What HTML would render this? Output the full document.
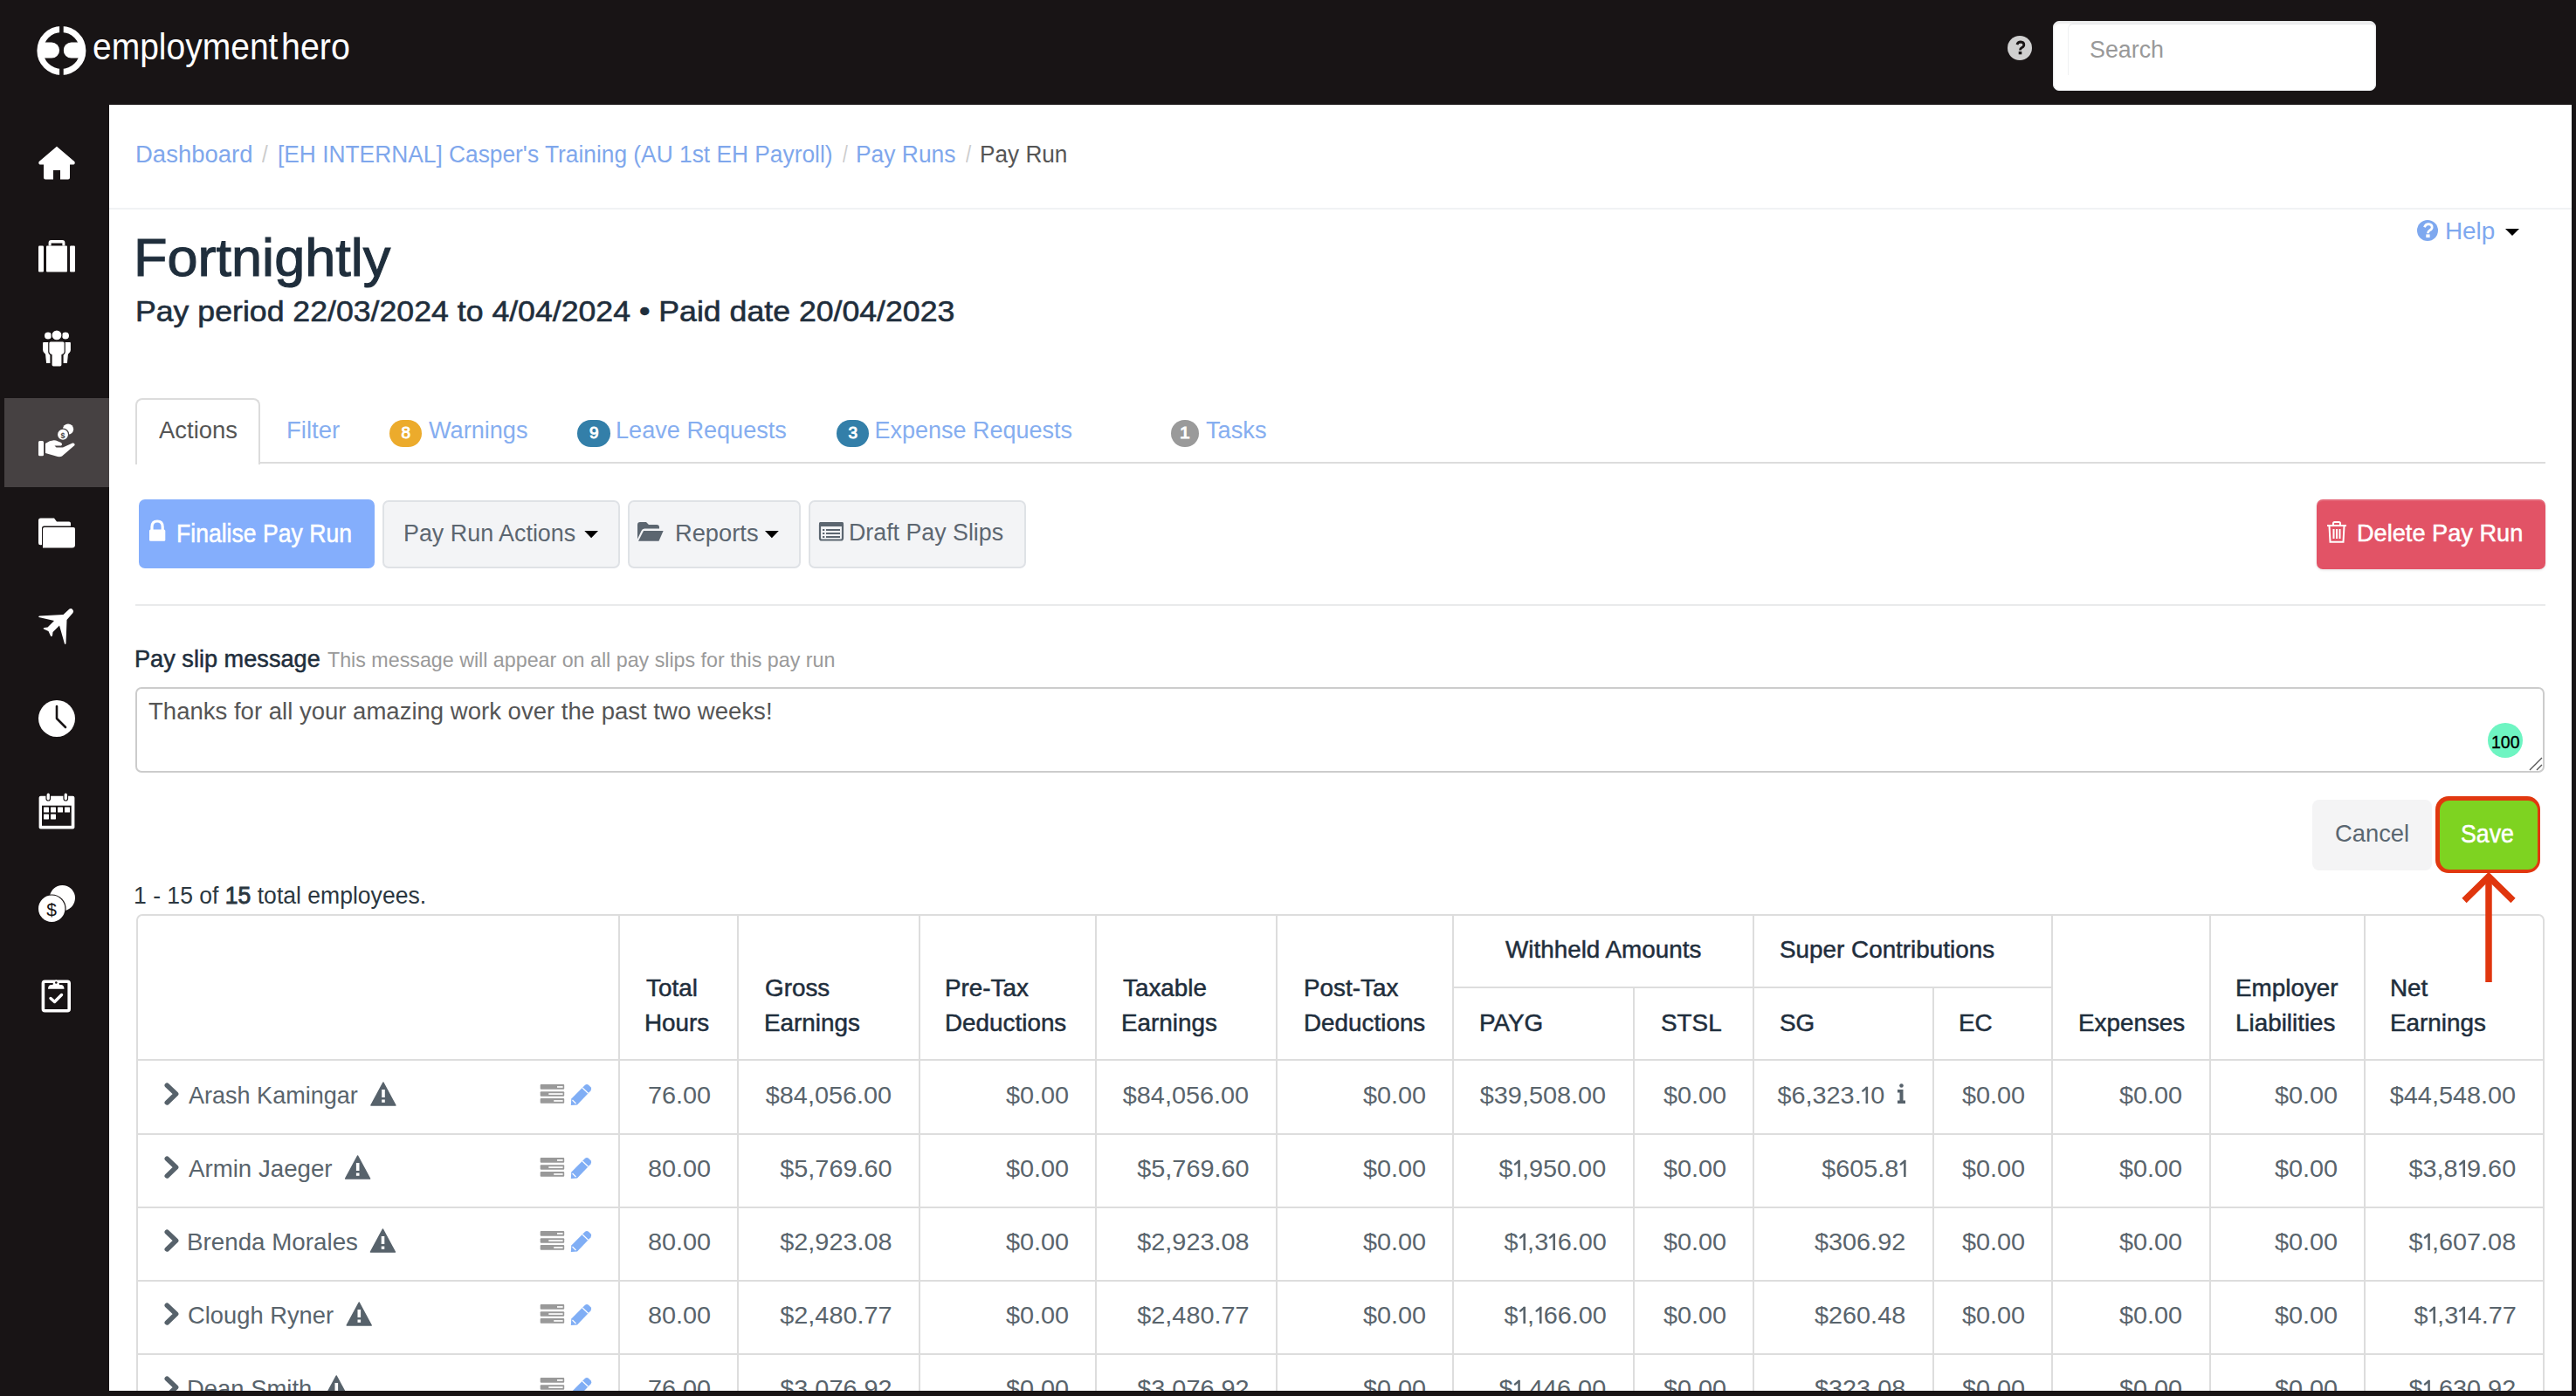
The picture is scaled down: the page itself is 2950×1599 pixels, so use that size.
<!DOCTYPE html>
<html><head><meta charset="utf-8"><style>
html,body{margin:0;padding:0;}
body{width:2950px;height:1599px;overflow:hidden;position:relative;background:#181415;font-family:"Liberation Sans", sans-serif;}
span{display:block;}
</style></head><body>
<div style="position:absolute;left:125px;top:120px;width:2820px;height:1473px;background:#fff;"></div><div style="position:absolute;left:5px;top:456px;width:120px;height:102px;background:#464142;"></div><div style="position:absolute;left:2351px;top:24px;width:370px;height:80px;background:#fff;border-radius:7px;box-shadow:inset 0 2px 2px rgba(0,0,0,0.08);border:1px solid #e6e8ea;box-sizing:border-box;"></div><div style="position:absolute;left:2368px;top:27px;width:350px;height:58px;border-left:1px solid #f0f1f2;border-top:1px solid #e3e5e8;border-radius:6px 0 0 0;"></div><div style="position:absolute;left:125px;top:238px;width:2820px;height:2px;background:#f1f2f4;"></div><div style="position:absolute;left:155px;top:456px;width:143px;height:76px;background:#fff;border:2px solid #dcdcdc;border-bottom:none;border-radius:8px 8px 0 0;box-sizing:border-box;"></div><div style="position:absolute;left:298px;top:529px;width:2617px;height:2px;background:#dcdcdc;"></div><div style="position:absolute;left:446px;top:481px;width:37px;height:31px;background:#ecab2c;border-radius:16px;"></div><div style="position:absolute;left:661.2px;top:481px;width:37.69999999999993px;height:31px;background:#337fa9;border-radius:16px;"></div><div style="position:absolute;left:958px;top:481px;width:37.200000000000045px;height:31px;background:#337fa9;border-radius:16px;"></div><div style="position:absolute;left:1341px;top:481px;width:32px;height:31px;background:#9a9a9a;border-radius:16px;"></div><div style="position:absolute;left:159px;top:572px;width:270px;height:79px;background:#84aefc;border-radius:7px;"></div><div style="position:absolute;left:437.6px;top:572.6px;width:272.4px;height:78.6px;background:#f3f4f6;border:2px solid #dfe2e6;border-radius:7px;box-sizing:border-box;"></div><div style="position:absolute;left:719px;top:572.6px;width:198px;height:78.6px;background:#f3f4f6;border:2px solid #dfe2e6;border-radius:7px;box-sizing:border-box;"></div><div style="position:absolute;left:926px;top:572.6px;width:249px;height:78.6px;background:#f3f4f6;border:2px solid #dfe2e6;border-radius:7px;box-sizing:border-box;"></div><div style="position:absolute;left:2653px;top:572px;width:262px;height:79.6px;background:#e25366;border-radius:7px;box-shadow:0 1px 3px rgba(0,0,0,0.12), inset 0 2px 0 rgba(255,255,255,0.12);"></div><div style="position:absolute;left:155px;top:691.5px;width:2760px;height:2px;background:#e9eaeb;"></div><div style="position:absolute;left:155px;top:787px;width:2759px;height:98px;background:#fff;border:2px solid #cccccc;border-radius:7px;box-sizing:border-box;"></div><div style="position:absolute;left:2648px;top:916px;width:137px;height:80.5px;background:#f4f4f5;border-radius:8px;"></div><div style="position:absolute;left:2789px;top:912px;width:120px;height:88px;background:#e1380f;border-radius:15px;"></div><div style="position:absolute;left:2794px;top:917px;width:112px;height:78.5px;background:#7ed321;border-radius:11px;"></div><div style="position:absolute;left:155.7px;top:1047px;width:2758.8px;height:600px;border:2px solid #dddddd;border-radius:7px;box-sizing:border-box;"></div><div style="position:absolute;left:708px;top:1047px;width:2px;height:600px;background:#dddddd;"></div><div style="position:absolute;left:844px;top:1047px;width:2px;height:600px;background:#dddddd;"></div><div style="position:absolute;left:1052px;top:1047px;width:2px;height:600px;background:#dddddd;"></div><div style="position:absolute;left:1254px;top:1047px;width:2px;height:600px;background:#dddddd;"></div><div style="position:absolute;left:1461px;top:1047px;width:2px;height:600px;background:#dddddd;"></div><div style="position:absolute;left:1663px;top:1047px;width:2px;height:600px;background:#dddddd;"></div><div style="position:absolute;left:1870px;top:1130.5px;width:2px;height:600px;background:#dddddd;"></div><div style="position:absolute;left:2007px;top:1047px;width:2px;height:600px;background:#dddddd;"></div><div style="position:absolute;left:2213px;top:1130.5px;width:2px;height:600px;background:#dddddd;"></div><div style="position:absolute;left:2349px;top:1047px;width:2px;height:600px;background:#dddddd;"></div><div style="position:absolute;left:2530px;top:1047px;width:2px;height:600px;background:#dddddd;"></div><div style="position:absolute;left:2707px;top:1047px;width:2px;height:600px;background:#dddddd;"></div><div style="position:absolute;left:1664px;top:1129.5px;width:686px;height:2px;background:#dddddd;"></div><div style="position:absolute;left:155.7px;top:1213px;width:2758.8px;height:2px;background:#dddddd;"></div><div style="position:absolute;left:155.7px;top:1297.8px;width:2758.8px;height:2px;background:#dddddd;"></div><div style="position:absolute;left:155.7px;top:1381.6px;width:2758.8px;height:2px;background:#dddddd;"></div><div style="position:absolute;left:155.7px;top:1465.6px;width:2758.8px;height:2px;background:#dddddd;"></div><div style="position:absolute;left:155.7px;top:1549.8px;width:2758.8px;height:2px;background:#dddddd;"></div><svg width="2950" height="1599" style="position:absolute;left:0;top:0"><g fill="#fff">
<circle cx="70.4" cy="58" r="24.5" fill="none" stroke="#fff" stroke-width="7"/>
<path d="M45 48.6 H59.1 A9 9 0 0 1 59.1 66.6 H45 Z"/>
<path d="M95.8 48.6 H81.7 A9 9 0 0 0 81.7 66.6 H95.8 Z"/>
<rect x="68.1" y="28" width="4.6" height="60" fill="#181415"/>
</g><circle cx="2313" cy="55" r="14" fill="#d0d0d0"/><path fill="#fff" d="M65 167.8 L44.5 185.3 Q43.5 187.5 45.5 188.5 L50 188.5 L50 203.5 Q50 205.5 52 205.5 L61 205.5 L61 195 L69 195 L69 205.5 L78 205.5 Q80 205.5 80 203.5 L80 188.5 L84.5 188.5 Q86.5 187.5 85.5 185.3 Z"/><g fill="#fff"><rect x="44" y="281.6" width="6" height="29.8" rx="1.2"/><rect x="80" y="281.6" width="6" height="29.8" rx="1.2"/><rect x="53" y="281.6" width="24" height="29.8" rx="1"/><path d="M55.6 281.6 V278 Q55.6 275 58.6 275 H71.4 Q74.4 275 74.4 278 V281.6 H71.4 V278.5 H58.6 V281.6 Z"/></g><g fill="#fff" stroke="#181415" stroke-width="1.2">
<circle cx="55" cy="384.5" r="4.6"/><circle cx="75" cy="384.5" r="4.6"/>
<path d="M48.5 393 Q48.5 391.5 50 391.5 H58 V416.7 H52.5 L51.5 406 Q48.5 404 48.5 401 Z"/>
<path d="M81.5 393 Q81.5 391.5 80 391.5 H72 V416.7 H77.5 L78.5 406 Q81.5 404 81.5 401 Z"/>
<circle cx="65" cy="383.9" r="6"/>
<path d="M55.8 393 Q55.8 390.8 58 390.8 H72 Q74.2 390.8 74.2 393 V403 Q74.2 405.5 71 406.5 V418 Q71 420 69 420 H61 Q59 420 59 418 V406.5 Q55.8 405.5 55.8 403 Z"/>
</g><g fill="#fff">
<rect x="44" y="505" width="6" height="17.3" rx="1.5"/>
<path d="M52 508 Q58 503.5 64 504.5 L70 507 Q72 509 70 510.5 L62.5 510.5 L64.5 512.5 L72 512.5 L83 507.5 Q86 507 85.5 510 L71 522.5 Q69 523.5 66 523 L52 519 Z"/>
<circle cx="78" cy="491.6" r="6.2"/>
<circle cx="72" cy="497.7" r="6.6" stroke="#464142" stroke-width="1.3"/>
</g>
<text x="72" y="501.5" font-family="Liberation Sans" font-size="9" font-weight="700" fill="#464142" text-anchor="middle">$</text><g fill="#fff">
<path d="M44 596 Q44 593.4 46.5 593.4 H62 L65 597.5 H79 Q81 597.5 81 599.5 V602.5 H50.5 Q48 602.5 48 605 V624 Q44 625 44 622 Z"/>
<path d="M49 606 Q49 604 51 604 H84 Q86 604 86 606 V624 Q86 627.5 82.5 627.5 H49 Z"/>
</g><path fill="#fff" d="M83 698 Q85 700 83.5 702 L76.5 710 L75.5 737 Q75 738.5 74 737.5 L68 716.5 L60.5 724 L60 728 Q59 729.5 58 728.5 L55.5 723 L50 720.5 Q49 719.5 50.5 719 L54.5 718.5 L62 711 L44.5 707 Q43.5 706 45 705.5 L72.5 704 L79.5 697.5 Q81.5 696.5 83 698 Z"/><circle cx="65" cy="823" r="21" fill="#fff"/><path d="M65 809 V823 L75 833" fill="none" stroke="#181415" stroke-width="2.6" stroke-linecap="round" stroke-linejoin="round"/><g fill="#fff"><rect x="44.6" y="911.7" width="40.8" height="37.8" rx="2"/>
<rect x="53" y="908" width="4.5" height="9" rx="2.2" stroke="#181415" stroke-width="1.2"/><rect x="73" y="908" width="4.5" height="9" rx="2.2" stroke="#181415" stroke-width="1.2"/></g>
<rect x="48" y="922.7" width="33.7" height="23.1" fill="#181415"/>
<g fill="#fff"><rect x="50" y="924.5" width="6" height="6" rx=".6"/><rect x="58" y="924.5" width="6" height="6" rx=".6"/><rect x="66" y="924.5" width="6" height="6" rx=".6"/><rect x="74" y="924.5" width="6" height="6" rx=".6"/><rect x="50" y="932.4" width="6" height="6" rx=".6"/><rect x="58" y="932.4" width="6" height="6" rx=".6"/></g><circle cx="71.4" cy="1028.6" r="14.6" fill="#fff"/>
<circle cx="59.2" cy="1040.8" r="16.4" fill="#181415"/>
<circle cx="59.2" cy="1040.8" r="15.2" fill="#fff"/>
<text x="59.2" y="1048.5" font-family="Liberation Sans" font-size="21" font-weight="400" fill="#181415" text-anchor="middle">$</text><rect x="49.4" y="1124.2" width="29.8" height="33.5" rx="2" fill="none" stroke="#fff" stroke-width="3.6"/>
<path d="M55 1132.7 Q55 1128 59 1128 L60.5 1128 Q61 1123 64.3 1122.5 Q67.5 1123 68 1128 L69.5 1128 Q73.5 1128 73.5 1132.7 Z" fill="#fff"/>
<circle cx="64.3" cy="1125.5" r="1.3" fill="#181415"/>
<path d="M58 1143.5 L62.5 1147.5 L70.5 1139.5" fill="none" stroke="#fff" stroke-width="3.4" stroke-linecap="round" stroke-linejoin="round"/><path d="M2309.9 51.2 Q2310.9 48 2314 48 Q2317.8 48.2 2317.8 51.2 Q2317.8 53.3 2315.4 54.5 Q2313.5 55.5 2313.5 57.5" fill="none" stroke="#181415" stroke-width="2.8"/><rect x="2311.7" y="59" width="3.6" height="3.3" fill="#181415"/><circle cx="2780" cy="264" r="12" fill="#7ea8ef"/><path d="M2776.4 260.2 Q2777.8 256.6 2781.2 256.6 Q2785.2 256.9 2785.2 260.2 Q2785.2 262.5 2782.4 263.9 Q2780.4 265 2780.4 267.3" fill="none" stroke="#fff" stroke-width="2.7"/><rect x="2778.3" y="268.4" width="4.3" height="3.7" fill="#fff"/><path d="M2869 262 H2885 L2877 270 Z" fill="#000"/><g fill="#fff"><path d="M174 607 V603.5 Q174 597 180.1 597 Q186.2 597 186.2 603.5 V607" fill="none" stroke="#fff" stroke-width="3.2"/><rect x="171" y="606.5" width="18.3" height="13.3" rx="1.5"/></g><path d="M669.3 607.9 H685 L677.15 616.2 Z" fill="#000"/><path fill="#5c6670" d="M730 601 Q730 598 733 598 H740 L743 601 H752 Q755 601 755 604 V605.5 H738 Q735.5 605.5 734.5 608 L730 617.5 Z"/><path fill="#5c6670" d="M737 608 H759.6 L754.5 619.8 H731 Z"/><path d="M876 607.9 H891.8 L883.9 616.2 Z" fill="#000"/><g><rect x="939" y="599" width="26" height="19.5" rx="2" fill="none" stroke="#5c6670" stroke-width="2.2"/><rect x="938" y="598" width="28" height="5" rx="1.5" fill="#5c6670"/><g fill="#5c6670"><rect x="942" y="606" width="2.3" height="2"/><rect x="946" y="606" width="16" height="2"/><rect x="942" y="610" width="2.3" height="2"/><rect x="946" y="610" width="16" height="2"/><rect x="942" y="614" width="2.3" height="2"/><rect x="946" y="614" width="16" height="2"/></g></g><g fill="none" stroke="#fff" stroke-width="2"><path d="M2665 602 H2687"/><path d="M2672 602 V599.5 Q2672 598 2673.5 598 H2678.5 Q2680 598 2680 599.5 V602"/><path d="M2667.5 602.5 L2668.5 620.7 H2683.5 L2684.5 602.5"/><path d="M2672.5 606 V617 M2676 606 V617 M2679.5 606 V617"/></g><circle cx="2869" cy="848" r="20" fill="#6ef5c2"/><path d="M2897 882 L2911 868 M2905 882 L2911 876" stroke="#555" stroke-width="1.4"/><g stroke="#e0360e" stroke-width="7.5" fill="none"><path d="M2850 1125 V1006"/><path d="M2822 1031.5 L2850 1004 L2878 1031.5"/></g><path d="M191.3 1243.2 L201.6 1253 L191.3 1262.9" fill="none" stroke="#57626b" stroke-width="5.6" stroke-linecap="round" stroke-linejoin="round"/><path d="M438.9 1240 L452.9 1266 H424.9 Z" fill="#57626b" stroke="#57626b" stroke-width="1.5" stroke-linejoin="round"/><rect x="437.2" y="1248" width="3.6" height="9" fill="#fff"/><rect x="437.2" y="1259.5" width="3.6" height="3.3" fill="#fff"/><rect x="618.7" y="1242.1" width="27.5" height="5.6" rx="1" fill="#999"/><rect x="638" y="1244.1" width="6.600000000000023" height="1.7" fill="#fff"/><rect x="618.7" y="1250.2" width="27.5" height="5.6" rx="1" fill="#999"/><rect x="628.3" y="1252.2" width="16.300000000000068" height="1.7" fill="#fff"/><rect x="618.7" y="1258.1" width="27.5" height="5.6" rx="1" fill="#999"/><rect x="634.2" y="1260.1" width="10.399999999999977" height="1.7" fill="#fff"/><g transform="translate(0 0)"><path d="M653.8 1265.9 L654.3 1258.5 L670 1242.8 Q672 1241.3 674 1242.8 L676.5 1245.2 Q678 1247.2 676.5 1249.2 L661 1265.4 Z" fill="#80aef5"/><path d="M667 1246 L673.5 1252.3" stroke="#fff" stroke-width="1.2"/><path d="M655.5 1260 L659.5 1264" stroke="#fff" stroke-width="1.3"/></g><path d="M191.3 1327.2 L201.6 1337 L191.3 1346.9" fill="none" stroke="#57626b" stroke-width="5.6" stroke-linecap="round" stroke-linejoin="round"/><path d="M409.6 1324 L423.6 1350 H395.6 Z" fill="#57626b" stroke="#57626b" stroke-width="1.5" stroke-linejoin="round"/><rect x="407.90000000000003" y="1332" width="3.6" height="9" fill="#fff"/><rect x="407.90000000000003" y="1343.5" width="3.6" height="3.3" fill="#fff"/><rect x="618.7" y="1326.1" width="27.5" height="5.6" rx="1" fill="#999"/><rect x="638" y="1328.1" width="6.600000000000023" height="1.7" fill="#fff"/><rect x="618.7" y="1334.2" width="27.5" height="5.6" rx="1" fill="#999"/><rect x="628.3" y="1336.2" width="16.300000000000068" height="1.7" fill="#fff"/><rect x="618.7" y="1342.1" width="27.5" height="5.6" rx="1" fill="#999"/><rect x="634.2" y="1344.1" width="10.399999999999977" height="1.7" fill="#fff"/><g transform="translate(0 84)"><path d="M653.8 1265.9 L654.3 1258.5 L670 1242.8 Q672 1241.3 674 1242.8 L676.5 1245.2 Q678 1247.2 676.5 1249.2 L661 1265.4 Z" fill="#80aef5"/><path d="M667 1246 L673.5 1252.3" stroke="#fff" stroke-width="1.2"/><path d="M655.5 1260 L659.5 1264" stroke="#fff" stroke-width="1.3"/></g><path d="M191.3 1411.2 L201.6 1421 L191.3 1430.9" fill="none" stroke="#57626b" stroke-width="5.6" stroke-linecap="round" stroke-linejoin="round"/><path d="M438.4 1408 L452.4 1434 H424.4 Z" fill="#57626b" stroke="#57626b" stroke-width="1.5" stroke-linejoin="round"/><rect x="436.7" y="1416" width="3.6" height="9" fill="#fff"/><rect x="436.7" y="1427.5" width="3.6" height="3.3" fill="#fff"/><rect x="618.7" y="1410.1" width="27.5" height="5.6" rx="1" fill="#999"/><rect x="638" y="1412.1" width="6.600000000000023" height="1.7" fill="#fff"/><rect x="618.7" y="1418.2" width="27.5" height="5.6" rx="1" fill="#999"/><rect x="628.3" y="1420.2" width="16.300000000000068" height="1.7" fill="#fff"/><rect x="618.7" y="1426.1" width="27.5" height="5.6" rx="1" fill="#999"/><rect x="634.2" y="1428.1" width="10.399999999999977" height="1.7" fill="#fff"/><g transform="translate(0 168)"><path d="M653.8 1265.9 L654.3 1258.5 L670 1242.8 Q672 1241.3 674 1242.8 L676.5 1245.2 Q678 1247.2 676.5 1249.2 L661 1265.4 Z" fill="#80aef5"/><path d="M667 1246 L673.5 1252.3" stroke="#fff" stroke-width="1.2"/><path d="M655.5 1260 L659.5 1264" stroke="#fff" stroke-width="1.3"/></g><path d="M191.3 1495.2 L201.6 1505 L191.3 1514.9" fill="none" stroke="#57626b" stroke-width="5.6" stroke-linecap="round" stroke-linejoin="round"/><path d="M411.2 1492 L425.2 1518 H397.2 Z" fill="#57626b" stroke="#57626b" stroke-width="1.5" stroke-linejoin="round"/><rect x="409.5" y="1500" width="3.6" height="9" fill="#fff"/><rect x="409.5" y="1511.5" width="3.6" height="3.3" fill="#fff"/><rect x="618.7" y="1494.1" width="27.5" height="5.6" rx="1" fill="#999"/><rect x="638" y="1496.1" width="6.600000000000023" height="1.7" fill="#fff"/><rect x="618.7" y="1502.2" width="27.5" height="5.6" rx="1" fill="#999"/><rect x="628.3" y="1504.2" width="16.300000000000068" height="1.7" fill="#fff"/><rect x="618.7" y="1510.1" width="27.5" height="5.6" rx="1" fill="#999"/><rect x="634.2" y="1512.1" width="10.399999999999977" height="1.7" fill="#fff"/><g transform="translate(0 252)"><path d="M653.8 1265.9 L654.3 1258.5 L670 1242.8 Q672 1241.3 674 1242.8 L676.5 1245.2 Q678 1247.2 676.5 1249.2 L661 1265.4 Z" fill="#80aef5"/><path d="M667 1246 L673.5 1252.3" stroke="#fff" stroke-width="1.2"/><path d="M655.5 1260 L659.5 1264" stroke="#fff" stroke-width="1.3"/></g><path d="M191.3 1579.2 L201.6 1589 L191.3 1598.9" fill="none" stroke="#57626b" stroke-width="5.6" stroke-linecap="round" stroke-linejoin="round"/><path d="M385.2 1576 L399.2 1602 H371.2 Z" fill="#57626b" stroke="#57626b" stroke-width="1.5" stroke-linejoin="round"/><rect x="383.5" y="1584" width="3.6" height="9" fill="#fff"/><rect x="383.5" y="1595.5" width="3.6" height="3.3" fill="#fff"/><rect x="618.7" y="1578.1" width="27.5" height="5.6" rx="1" fill="#999"/><rect x="638" y="1580.1" width="6.600000000000023" height="1.7" fill="#fff"/><rect x="618.7" y="1586.2" width="27.5" height="5.6" rx="1" fill="#999"/><rect x="628.3" y="1588.2" width="16.300000000000068" height="1.7" fill="#fff"/><rect x="618.7" y="1594.1" width="27.5" height="5.6" rx="1" fill="#999"/><rect x="634.2" y="1596.1" width="10.399999999999977" height="1.7" fill="#fff"/><g transform="translate(0 336)"><path d="M653.8 1265.9 L654.3 1258.5 L670 1242.8 Q672 1241.3 674 1242.8 L676.5 1245.2 Q678 1247.2 676.5 1249.2 L661 1265.4 Z" fill="#80aef5"/><path d="M667 1246 L673.5 1252.3" stroke="#fff" stroke-width="1.2"/><path d="M655.5 1260 L659.5 1264" stroke="#fff" stroke-width="1.3"/></g><g fill="#57626b"><circle cx="2177.5" cy="1243.5" r="2.3"/><path d="M2173 1248 H2179.5 V1260.5 H2182 V1264 H2173 V1260.5 H2175.5 V1251.5 H2173 Z"/></g></svg>
<span id="t0" style="position:absolute;top:32.74px;font-size:42px;line-height:42px;font-weight:400;color:#fff;white-space:nowrap;left:105.57px;transform-origin:0 0;transform:scaleX(0.9286);">employment</span><span id="t1" style="position:absolute;top:32.74px;font-size:42px;line-height:42px;font-weight:400;color:#fff;white-space:nowrap;left:322.12px;transform-origin:0 0;transform:scaleX(0.9380);">hero</span><span id="t2" style="position:absolute;top:43.64px;font-size:27px;line-height:27px;font-weight:400;color:#999;white-space:nowrap;left:2393.01px;transform-origin:0 0;transform:scaleX(0.9936);">Search</span><span id="t3" style="position:absolute;top:163.84px;font-size:27px;line-height:27px;font-weight:400;color:#7fa7ec;white-space:nowrap;left:154.76px;transform-origin:0 0;transform:scaleX(1.0180);">Dashboard</span><span id="t4" style="position:absolute;top:163.84px;font-size:27px;line-height:27px;font-weight:400;color:#ccc;white-space:nowrap;left:300.40px;transform-origin:0 0;transform:scaleX(0.9000);">/</span><span id="t5" style="position:absolute;top:163.84px;font-size:27px;line-height:27px;font-weight:400;color:#7fa7ec;white-space:nowrap;left:317.92px;transform-origin:0 0;transform:scaleX(0.9750);">[EH INTERNAL] Casper's Training (AU 1st EH Payroll)</span><span id="t6" style="position:absolute;top:163.84px;font-size:27px;line-height:27px;font-weight:400;color:#ccc;white-space:nowrap;left:964.80px;transform-origin:0 0;transform:scaleX(0.7750);">/</span><span id="t7" style="position:absolute;top:163.84px;font-size:27px;line-height:27px;font-weight:400;color:#7fa7ec;white-space:nowrap;left:980.04px;transform-origin:0 0;transform:scaleX(0.9777);">Pay Runs</span><span id="t8" style="position:absolute;top:163.84px;font-size:27px;line-height:27px;font-weight:400;color:#ccc;white-space:nowrap;left:1106.00px;transform-origin:0 0;transform:scaleX(0.8250);">/</span><span id="t9" style="position:absolute;top:163.84px;font-size:27px;line-height:27px;font-weight:400;color:#555;white-space:nowrap;left:1121.56px;transform-origin:0 0;transform:scaleX(0.9698);">Pay Run</span><span id="t10" style="position:absolute;top:263.50px;font-size:62px;line-height:62px;font-weight:400;color:#1f2e3c;white-space:nowrap;left:153.12px;transform-origin:0 0;transform:scaleX(1.0167);-webkit-text-stroke:1.12px #1f2e3c;">Fortnightly</span><span id="t11" style="position:absolute;top:339.76px;font-size:33px;line-height:33px;font-weight:400;color:#1f2e3c;white-space:nowrap;left:155.24px;transform-origin:0 0;transform:scaleX(1.0805);-webkit-text-stroke:0.59px #1f2e3c;">Pay period 22/03/2024 to 4/04/2024 • Paid date 20/04/2023</span><span id="t12" style="position:absolute;top:252.04px;font-size:27px;line-height:27px;font-weight:400;color:#7ea8ef;white-space:nowrap;left:2799.74px;transform-origin:0 0;transform:scaleX(1.0321);">Help</span><span id="t13" style="position:absolute;top:480.24px;font-size:27px;line-height:27px;font-weight:400;color:#555;white-space:nowrap;left:182.00px;transform-origin:0 0;transform:scaleX(1.0166);">Actions</span><span id="t14" style="position:absolute;top:479.84px;font-size:27px;line-height:27px;font-weight:400;color:#86aef0;white-space:nowrap;left:327.76px;transform-origin:0 0;transform:scaleX(1.0206);">Filter</span><span id="t15" style="position:absolute;top:486.41px;font-size:19px;line-height:19px;font-weight:400;color:#fff;white-space:nowrap;left:459.50px;transform-origin:0 0;-webkit-text-stroke:0.95px #fff;">8</span><span id="t16" style="position:absolute;top:479.84px;font-size:27px;line-height:27px;font-weight:400;color:#86aef0;white-space:nowrap;left:491.00px;transform-origin:0 0;transform:scaleX(1.0041);">Warnings</span><span id="t17" style="position:absolute;top:486.41px;font-size:19px;line-height:19px;font-weight:400;color:#fff;white-space:nowrap;left:675.05px;transform-origin:0 0;-webkit-text-stroke:0.95px #fff;">9</span><span id="t18" style="position:absolute;top:479.84px;font-size:27px;line-height:27px;font-weight:400;color:#86aef0;white-space:nowrap;left:704.99px;transform-origin:0 0;transform:scaleX(1.0040);">Leave Requests</span><span id="t19" style="position:absolute;top:486.41px;font-size:19px;line-height:19px;font-weight:400;color:#fff;white-space:nowrap;left:971.60px;transform-origin:0 0;-webkit-text-stroke:0.95px #fff;">3</span><span id="t20" style="position:absolute;top:479.84px;font-size:27px;line-height:27px;font-weight:400;color:#86aef0;white-space:nowrap;left:1001.40px;transform-origin:0 0;">Expense Requests</span><span id="t21" style="position:absolute;top:486.41px;font-size:19px;line-height:19px;font-weight:400;color:#fff;white-space:nowrap;left:1350.89px;transform-origin:0 0;transform:scaleX(1.1111);-webkit-text-stroke:0.95px #fff;">1</span><span id="t22" style="position:absolute;top:479.84px;font-size:27px;line-height:27px;font-weight:400;color:#86aef0;white-space:nowrap;left:1381.40px;transform-origin:0 0;transform:scaleX(1.0071);">Tasks</span><span id="t23" style="position:absolute;top:595.60px;font-size:30px;line-height:30px;font-weight:400;color:#fff;white-space:nowrap;left:201.83px;transform-origin:0 0;transform:scaleX(0.8862);-webkit-text-stroke:0.54px #fff;">Finalise Pay Run</span><span id="t24" style="position:absolute;top:597.54px;font-size:27px;line-height:27px;font-weight:400;color:#5c6670;white-space:nowrap;left:461.81px;transform-origin:0 0;transform:scaleX(0.9954);">Pay Run Actions</span><span id="t25" style="position:absolute;top:597.64px;font-size:27px;line-height:27px;font-weight:400;color:#5c6670;white-space:nowrap;left:772.98px;transform-origin:0 0;transform:scaleX(1.0104);">Reports</span><span id="t26" style="position:absolute;top:597.34px;font-size:27px;line-height:27px;font-weight:400;color:#5c6670;white-space:nowrap;left:972.02px;transform-origin:0 0;transform:scaleX(0.9917);">Draft Pay Slips</span><span id="t27" style="position:absolute;top:597.39px;font-size:28px;line-height:28px;font-weight:400;color:#fff;white-space:nowrap;left:2699.06px;transform-origin:0 0;transform:scaleX(0.9702);-webkit-text-stroke:0.50px #fff;">Delete Pay Run</span><span id="t28" style="position:absolute;top:740.99px;font-size:28px;line-height:28px;font-weight:400;color:#1f2e3c;white-space:nowrap;left:153.76px;transform-origin:0 0;transform:scaleX(0.9697);-webkit-text-stroke:0.50px #1f2e3c;">Pay slip message</span><span id="t29" style="position:absolute;top:744.38px;font-size:24px;line-height:24px;font-weight:400;color:#9a9a9a;white-space:nowrap;left:375.00px;transform-origin:0 0;transform:scaleX(0.9684);">This message will appear on all pay slips for this pay run</span><span id="t30" style="position:absolute;top:801.84px;font-size:27px;line-height:27px;font-weight:400;color:#555;white-space:nowrap;left:170.00px;transform-origin:0 0;transform:scaleX(1.0196);">Thanks for all your amazing work over the past two weeks!</span><span id="t31" style="position:absolute;top:838.92px;font-size:21px;line-height:21px;font-weight:400;color:#000;white-space:nowrap;left:2852.57px;transform-origin:0 0;transform:scaleX(0.9293);-webkit-text-stroke:0.38px #000;">100</span><span id="t32" style="position:absolute;top:941.49px;font-size:28px;line-height:28px;font-weight:400;color:#5a6670;white-space:nowrap;left:2674.02px;transform-origin:0 0;transform:scaleX(0.9772);">Cancel</span><span id="t33" style="position:absolute;top:940.65px;font-size:29px;line-height:29px;font-weight:400;color:#fff;white-space:nowrap;left:2818.08px;transform-origin:0 0;transform:scaleX(0.9223);-webkit-text-stroke:0.52px #fff;">Save</span><span id="t34" style="position:absolute;top:1012.54px;font-size:27px;line-height:27px;font-weight:400;color:#2b3740;white-space:nowrap;left:153.03px;transform-origin:0 0;transform:scaleX(0.9834);">1 - 15 of <b style="font-weight:400;-webkit-text-stroke:0.9px #2b3740">15</b> total employees.</span><span id="t35" style="position:absolute;top:1117.69px;font-size:27.3px;line-height:27.3px;font-weight:400;color:#1f2e3c;white-space:nowrap;left:740.40px;transform-origin:0 0;transform:scaleX(1.0200);-webkit-text-stroke:0.49px #1f2e3c;">Total</span><span id="t36" style="position:absolute;top:1157.99px;font-size:27.3px;line-height:27.3px;font-weight:400;color:#1f2e3c;white-space:nowrap;left:738.36px;transform-origin:0 0;transform:scaleX(1.0200);-webkit-text-stroke:0.49px #1f2e3c;">Hours</span><span id="t37" style="position:absolute;top:1117.69px;font-size:27.3px;line-height:27.3px;font-weight:400;color:#1f2e3c;white-space:nowrap;left:875.68px;transform-origin:0 0;transform:scaleX(1.0200);-webkit-text-stroke:0.49px #1f2e3c;">Gross</span><span id="t38" style="position:absolute;top:1157.99px;font-size:27.3px;line-height:27.3px;font-weight:400;color:#1f2e3c;white-space:nowrap;left:874.66px;transform-origin:0 0;transform:scaleX(1.0200);-webkit-text-stroke:0.49px #1f2e3c;">Earnings</span><span id="t39" style="position:absolute;top:1117.69px;font-size:27.3px;line-height:27.3px;font-weight:400;color:#1f2e3c;white-space:nowrap;left:1081.96px;transform-origin:0 0;transform:scaleX(1.0200);-webkit-text-stroke:0.49px #1f2e3c;">Pre-Tax</span><span id="t40" style="position:absolute;top:1157.99px;font-size:27.3px;line-height:27.3px;font-weight:400;color:#1f2e3c;white-space:nowrap;left:1081.96px;transform-origin:0 0;transform:scaleX(1.0200);-webkit-text-stroke:0.49px #1f2e3c;">Deductions</span><span id="t41" style="position:absolute;top:1117.69px;font-size:27.3px;line-height:27.3px;font-weight:400;color:#1f2e3c;white-space:nowrap;left:1286.00px;transform-origin:0 0;transform:scaleX(1.0200);-webkit-text-stroke:0.49px #1f2e3c;">Taxable</span><span id="t42" style="position:absolute;top:1157.99px;font-size:27.3px;line-height:27.3px;font-weight:400;color:#1f2e3c;white-space:nowrap;left:1283.96px;transform-origin:0 0;transform:scaleX(1.0200);-webkit-text-stroke:0.49px #1f2e3c;">Earnings</span><span id="t43" style="position:absolute;top:1117.69px;font-size:27.3px;line-height:27.3px;font-weight:400;color:#1f2e3c;white-space:nowrap;left:1492.56px;transform-origin:0 0;transform:scaleX(1.0200);-webkit-text-stroke:0.49px #1f2e3c;">Post-Tax</span><span id="t44" style="position:absolute;top:1157.99px;font-size:27.3px;line-height:27.3px;font-weight:400;color:#1f2e3c;white-space:nowrap;left:1492.56px;transform-origin:0 0;transform:scaleX(1.0200);-webkit-text-stroke:0.49px #1f2e3c;">Deductions</span><span id="t45" style="position:absolute;top:1074.09px;font-size:27.3px;line-height:27.3px;font-weight:400;color:#1f2e3c;white-space:nowrap;left:1724.00px;transform-origin:0 0;transform:scaleX(1.0200);-webkit-text-stroke:0.49px #1f2e3c;">Withheld Amounts</span><span id="t46" style="position:absolute;top:1074.09px;font-size:27.3px;line-height:27.3px;font-weight:400;color:#1f2e3c;white-space:nowrap;left:2037.98px;transform-origin:0 0;transform:scaleX(1.0200);-webkit-text-stroke:0.49px #1f2e3c;">Super Contributions</span><span id="t47" style="position:absolute;top:1157.99px;font-size:27.3px;line-height:27.3px;font-weight:400;color:#1f2e3c;white-space:nowrap;left:1693.96px;transform-origin:0 0;transform:scaleX(1.0200);-webkit-text-stroke:0.49px #1f2e3c;">PAYG</span><span id="t48" style="position:absolute;top:1157.99px;font-size:27.3px;line-height:27.3px;font-weight:400;color:#1f2e3c;white-space:nowrap;left:1901.98px;transform-origin:0 0;transform:scaleX(1.0200);-webkit-text-stroke:0.49px #1f2e3c;">STSL</span><span id="t49" style="position:absolute;top:1157.99px;font-size:27.3px;line-height:27.3px;font-weight:400;color:#1f2e3c;white-space:nowrap;left:2037.98px;transform-origin:0 0;transform:scaleX(1.0200);-webkit-text-stroke:0.49px #1f2e3c;">SG</span><span id="t50" style="position:absolute;top:1157.99px;font-size:27.3px;line-height:27.3px;font-weight:400;color:#1f2e3c;white-space:nowrap;left:2242.96px;transform-origin:0 0;transform:scaleX(1.0200);-webkit-text-stroke:0.49px #1f2e3c;">EC</span><span id="t51" style="position:absolute;top:1157.99px;font-size:27.3px;line-height:27.3px;font-weight:400;color:#1f2e3c;white-space:nowrap;left:2379.56px;transform-origin:0 0;transform:scaleX(1.0200);-webkit-text-stroke:0.49px #1f2e3c;">Expenses</span><span id="t52" style="position:absolute;top:1117.69px;font-size:27.3px;line-height:27.3px;font-weight:400;color:#1f2e3c;white-space:nowrap;left:2559.96px;transform-origin:0 0;transform:scaleX(1.0200);-webkit-text-stroke:0.49px #1f2e3c;">Employer</span><span id="t53" style="position:absolute;top:1157.99px;font-size:27.3px;line-height:27.3px;font-weight:400;color:#1f2e3c;white-space:nowrap;left:2559.96px;transform-origin:0 0;transform:scaleX(1.0200);-webkit-text-stroke:0.49px #1f2e3c;">Liabilities</span><span id="t54" style="position:absolute;top:1117.69px;font-size:27.3px;line-height:27.3px;font-weight:400;color:#1f2e3c;white-space:nowrap;left:2736.96px;transform-origin:0 0;transform:scaleX(1.0200);-webkit-text-stroke:0.49px #1f2e3c;">Net</span><span id="t55" style="position:absolute;top:1157.99px;font-size:27.3px;line-height:27.3px;font-weight:400;color:#1f2e3c;white-space:nowrap;left:2736.96px;transform-origin:0 0;transform:scaleX(1.0200);-webkit-text-stroke:0.49px #1f2e3c;">Earnings</span><span id="t56" style="position:absolute;top:1241.29px;font-size:28px;line-height:28px;font-weight:400;color:#59646c;white-space:nowrap;left:216.40px;transform-origin:0 0;transform:scaleX(0.9654);">Arash Kamingar</span><span id="t57" style="position:absolute;top:1241.29px;font-size:28px;line-height:28px;font-weight:400;color:#59646c;white-space:nowrap;right:2136.41px;transform-origin:100% 0;transform:scaleX(1.0300);">76.00</span><span id="t58" style="position:absolute;top:1241.29px;font-size:28px;line-height:28px;font-weight:400;color:#59646c;white-space:nowrap;right:1928.41px;transform-origin:100% 0;transform:scaleX(1.0300);">$84,056.00</span><span id="t59" style="position:absolute;top:1241.29px;font-size:28px;line-height:28px;font-weight:400;color:#59646c;white-space:nowrap;right:1726.41px;transform-origin:100% 0;transform:scaleX(1.0300);">$0.00</span><span id="t60" style="position:absolute;top:1241.29px;font-size:28px;line-height:28px;font-weight:400;color:#59646c;white-space:nowrap;right:1519.41px;transform-origin:100% 0;transform:scaleX(1.0300);">$84,056.00</span><span id="t61" style="position:absolute;top:1241.29px;font-size:28px;line-height:28px;font-weight:400;color:#59646c;white-space:nowrap;right:1317.41px;transform-origin:100% 0;transform:scaleX(1.0300);">$0.00</span><span id="t62" style="position:absolute;top:1241.29px;font-size:28px;line-height:28px;font-weight:400;color:#59646c;white-space:nowrap;right:1110.41px;transform-origin:100% 0;transform:scaleX(1.0300);">$39,508.00</span><span id="t63" style="position:absolute;top:1241.29px;font-size:28px;line-height:28px;font-weight:400;color:#59646c;white-space:nowrap;right:973.41px;transform-origin:100% 0;transform:scaleX(1.0300);">$0.00</span><span id="t64" style="position:absolute;top:1241.29px;font-size:28px;line-height:28px;font-weight:400;color:#59646c;white-space:nowrap;right:631.41px;transform-origin:100% 0;transform:scaleX(1.0300);">$0.00</span><span id="t65" style="position:absolute;top:1241.29px;font-size:28px;line-height:28px;font-weight:400;color:#59646c;white-space:nowrap;right:451.41px;transform-origin:100% 0;transform:scaleX(1.0300);">$0.00</span><span id="t66" style="position:absolute;top:1241.29px;font-size:28px;line-height:28px;font-weight:400;color:#59646c;white-space:nowrap;right:273.41px;transform-origin:100% 0;transform:scaleX(1.0300);">$0.00</span><span id="t67" style="position:absolute;top:1241.29px;font-size:28px;line-height:28px;font-weight:400;color:#59646c;white-space:nowrap;right:68.41px;transform-origin:100% 0;transform:scaleX(1.0300);">$44,548.00</span><span id="t68" style="position:absolute;top:1325.29px;font-size:28px;line-height:28px;font-weight:400;color:#59646c;white-space:nowrap;left:216.40px;transform-origin:0 0;transform:scaleX(0.9881);">Armin Jaeger</span><span id="t69" style="position:absolute;top:1325.29px;font-size:28px;line-height:28px;font-weight:400;color:#59646c;white-space:nowrap;right:2136.41px;transform-origin:100% 0;transform:scaleX(1.0300);">80.00</span><span id="t70" style="position:absolute;top:1325.29px;font-size:28px;line-height:28px;font-weight:400;color:#59646c;white-space:nowrap;right:1928.41px;transform-origin:100% 0;transform:scaleX(1.0300);">$5,769.60</span><span id="t71" style="position:absolute;top:1325.29px;font-size:28px;line-height:28px;font-weight:400;color:#59646c;white-space:nowrap;right:1726.41px;transform-origin:100% 0;transform:scaleX(1.0300);">$0.00</span><span id="t72" style="position:absolute;top:1325.29px;font-size:28px;line-height:28px;font-weight:400;color:#59646c;white-space:nowrap;right:1519.41px;transform-origin:100% 0;transform:scaleX(1.0300);">$5,769.60</span><span id="t73" style="position:absolute;top:1325.29px;font-size:28px;line-height:28px;font-weight:400;color:#59646c;white-space:nowrap;right:1317.41px;transform-origin:100% 0;transform:scaleX(1.0300);">$0.00</span><span id="t74" style="position:absolute;top:1325.29px;font-size:28px;line-height:28px;font-weight:400;color:#59646c;white-space:nowrap;right:1110.41px;transform-origin:100% 0;transform:scaleX(1.0300);">$<svg width="10.2" height="20" style="display:inline-block;vertical-align:baseline;overflow:visible"><rect x="5.2" y="0.8" width="2.5" height="19.2" fill="#59646c"/><path d="M6.3 1.9 L2 5.6" stroke="#59646c" stroke-width="2.4" stroke-linecap="round" fill="none"/></svg>,950.00</span><span id="t75" style="position:absolute;top:1325.29px;font-size:28px;line-height:28px;font-weight:400;color:#59646c;white-space:nowrap;right:973.41px;transform-origin:100% 0;transform:scaleX(1.0300);">$0.00</span><span id="t76" style="position:absolute;top:1325.29px;font-size:28px;line-height:28px;font-weight:400;color:#59646c;white-space:nowrap;right:765.32px;transform-origin:100% 0;transform:scaleX(1.0300);">$605.8<svg width="10.2" height="20" style="display:inline-block;vertical-align:baseline;overflow:visible"><rect x="5.2" y="0.8" width="2.5" height="19.2" fill="#59646c"/><path d="M6.3 1.9 L2 5.6" stroke="#59646c" stroke-width="2.4" stroke-linecap="round" fill="none"/></svg></span><span id="t77" style="position:absolute;top:1325.29px;font-size:28px;line-height:28px;font-weight:400;color:#59646c;white-space:nowrap;right:631.41px;transform-origin:100% 0;transform:scaleX(1.0300);">$0.00</span><span id="t78" style="position:absolute;top:1325.29px;font-size:28px;line-height:28px;font-weight:400;color:#59646c;white-space:nowrap;right:451.41px;transform-origin:100% 0;transform:scaleX(1.0300);">$0.00</span><span id="t79" style="position:absolute;top:1325.29px;font-size:28px;line-height:28px;font-weight:400;color:#59646c;white-space:nowrap;right:273.41px;transform-origin:100% 0;transform:scaleX(1.0300);">$0.00</span><span id="t80" style="position:absolute;top:1325.29px;font-size:28px;line-height:28px;font-weight:400;color:#59646c;white-space:nowrap;right:68.41px;transform-origin:100% 0;transform:scaleX(1.0300);">$3,8<svg width="10.2" height="20" style="display:inline-block;vertical-align:baseline;overflow:visible"><rect x="5.2" y="0.8" width="2.5" height="19.2" fill="#59646c"/><path d="M6.3 1.9 L2 5.6" stroke="#59646c" stroke-width="2.4" stroke-linecap="round" fill="none"/></svg>9.60</span><span id="t81" style="position:absolute;top:1409.29px;font-size:28px;line-height:28px;font-weight:400;color:#59646c;white-space:nowrap;left:214.42px;transform-origin:0 0;transform:scaleX(0.9915);">Brenda Morales</span><span id="t82" style="position:absolute;top:1409.29px;font-size:28px;line-height:28px;font-weight:400;color:#59646c;white-space:nowrap;right:2136.41px;transform-origin:100% 0;transform:scaleX(1.0300);">80.00</span><span id="t83" style="position:absolute;top:1409.29px;font-size:28px;line-height:28px;font-weight:400;color:#59646c;white-space:nowrap;right:1928.41px;transform-origin:100% 0;transform:scaleX(1.0300);">$2,923.08</span><span id="t84" style="position:absolute;top:1409.29px;font-size:28px;line-height:28px;font-weight:400;color:#59646c;white-space:nowrap;right:1726.41px;transform-origin:100% 0;transform:scaleX(1.0300);">$0.00</span><span id="t85" style="position:absolute;top:1409.29px;font-size:28px;line-height:28px;font-weight:400;color:#59646c;white-space:nowrap;right:1519.41px;transform-origin:100% 0;transform:scaleX(1.0300);">$2,923.08</span><span id="t86" style="position:absolute;top:1409.29px;font-size:28px;line-height:28px;font-weight:400;color:#59646c;white-space:nowrap;right:1317.41px;transform-origin:100% 0;transform:scaleX(1.0300);">$0.00</span><span id="t87" style="position:absolute;top:1409.29px;font-size:28px;line-height:28px;font-weight:400;color:#59646c;white-space:nowrap;right:1110.41px;transform-origin:100% 0;transform:scaleX(1.0300);">$<svg width="10.2" height="20" style="display:inline-block;vertical-align:baseline;overflow:visible"><rect x="5.2" y="0.8" width="2.5" height="19.2" fill="#59646c"/><path d="M6.3 1.9 L2 5.6" stroke="#59646c" stroke-width="2.4" stroke-linecap="round" fill="none"/></svg>,3<svg width="10.2" height="20" style="display:inline-block;vertical-align:baseline;overflow:visible"><rect x="5.2" y="0.8" width="2.5" height="19.2" fill="#59646c"/><path d="M6.3 1.9 L2 5.6" stroke="#59646c" stroke-width="2.4" stroke-linecap="round" fill="none"/></svg>6.00</span><span id="t88" style="position:absolute;top:1409.29px;font-size:28px;line-height:28px;font-weight:400;color:#59646c;white-space:nowrap;right:973.41px;transform-origin:100% 0;transform:scaleX(1.0300);">$0.00</span><span id="t89" style="position:absolute;top:1409.29px;font-size:28px;line-height:28px;font-weight:400;color:#59646c;white-space:nowrap;right:767.41px;transform-origin:100% 0;transform:scaleX(1.0300);">$306.92</span><span id="t90" style="position:absolute;top:1409.29px;font-size:28px;line-height:28px;font-weight:400;color:#59646c;white-space:nowrap;right:631.41px;transform-origin:100% 0;transform:scaleX(1.0300);">$0.00</span><span id="t91" style="position:absolute;top:1409.29px;font-size:28px;line-height:28px;font-weight:400;color:#59646c;white-space:nowrap;right:451.41px;transform-origin:100% 0;transform:scaleX(1.0300);">$0.00</span><span id="t92" style="position:absolute;top:1409.29px;font-size:28px;line-height:28px;font-weight:400;color:#59646c;white-space:nowrap;right:273.41px;transform-origin:100% 0;transform:scaleX(1.0300);">$0.00</span><span id="t93" style="position:absolute;top:1409.29px;font-size:28px;line-height:28px;font-weight:400;color:#59646c;white-space:nowrap;right:68.41px;transform-origin:100% 0;transform:scaleX(1.0300);">$<svg width="10.2" height="20" style="display:inline-block;vertical-align:baseline;overflow:visible"><rect x="5.2" y="0.8" width="2.5" height="19.2" fill="#59646c"/><path d="M6.3 1.9 L2 5.6" stroke="#59646c" stroke-width="2.4" stroke-linecap="round" fill="none"/></svg>,607.08</span><span id="t94" style="position:absolute;top:1493.29px;font-size:28px;line-height:28px;font-weight:400;color:#59646c;white-space:nowrap;left:215.42px;transform-origin:0 0;transform:scaleX(0.9760);">Clough Ryner</span><span id="t95" style="position:absolute;top:1493.29px;font-size:28px;line-height:28px;font-weight:400;color:#59646c;white-space:nowrap;right:2136.41px;transform-origin:100% 0;transform:scaleX(1.0300);">80.00</span><span id="t96" style="position:absolute;top:1493.29px;font-size:28px;line-height:28px;font-weight:400;color:#59646c;white-space:nowrap;right:1928.41px;transform-origin:100% 0;transform:scaleX(1.0300);">$2,480.77</span><span id="t97" style="position:absolute;top:1493.29px;font-size:28px;line-height:28px;font-weight:400;color:#59646c;white-space:nowrap;right:1726.41px;transform-origin:100% 0;transform:scaleX(1.0300);">$0.00</span><span id="t98" style="position:absolute;top:1493.29px;font-size:28px;line-height:28px;font-weight:400;color:#59646c;white-space:nowrap;right:1519.41px;transform-origin:100% 0;transform:scaleX(1.0300);">$2,480.77</span><span id="t99" style="position:absolute;top:1493.29px;font-size:28px;line-height:28px;font-weight:400;color:#59646c;white-space:nowrap;right:1317.41px;transform-origin:100% 0;transform:scaleX(1.0300);">$0.00</span><span id="t100" style="position:absolute;top:1493.29px;font-size:28px;line-height:28px;font-weight:400;color:#59646c;white-space:nowrap;right:1110.41px;transform-origin:100% 0;transform:scaleX(1.0300);">$<svg width="10.2" height="20" style="display:inline-block;vertical-align:baseline;overflow:visible"><rect x="5.2" y="0.8" width="2.5" height="19.2" fill="#59646c"/><path d="M6.3 1.9 L2 5.6" stroke="#59646c" stroke-width="2.4" stroke-linecap="round" fill="none"/></svg>,<svg width="10.2" height="20" style="display:inline-block;vertical-align:baseline;overflow:visible"><rect x="5.2" y="0.8" width="2.5" height="19.2" fill="#59646c"/><path d="M6.3 1.9 L2 5.6" stroke="#59646c" stroke-width="2.4" stroke-linecap="round" fill="none"/></svg>66.00</span><span id="t101" style="position:absolute;top:1493.29px;font-size:28px;line-height:28px;font-weight:400;color:#59646c;white-space:nowrap;right:973.41px;transform-origin:100% 0;transform:scaleX(1.0300);">$0.00</span><span id="t102" style="position:absolute;top:1493.29px;font-size:28px;line-height:28px;font-weight:400;color:#59646c;white-space:nowrap;right:767.41px;transform-origin:100% 0;transform:scaleX(1.0300);">$260.48</span><span id="t103" style="position:absolute;top:1493.29px;font-size:28px;line-height:28px;font-weight:400;color:#59646c;white-space:nowrap;right:631.41px;transform-origin:100% 0;transform:scaleX(1.0300);">$0.00</span><span id="t104" style="position:absolute;top:1493.29px;font-size:28px;line-height:28px;font-weight:400;color:#59646c;white-space:nowrap;right:451.41px;transform-origin:100% 0;transform:scaleX(1.0300);">$0.00</span><span id="t105" style="position:absolute;top:1493.29px;font-size:28px;line-height:28px;font-weight:400;color:#59646c;white-space:nowrap;right:273.41px;transform-origin:100% 0;transform:scaleX(1.0300);">$0.00</span><span id="t106" style="position:absolute;top:1493.29px;font-size:28px;line-height:28px;font-weight:400;color:#59646c;white-space:nowrap;right:68.41px;transform-origin:100% 0;transform:scaleX(1.0300);">$<svg width="10.2" height="20" style="display:inline-block;vertical-align:baseline;overflow:visible"><rect x="5.2" y="0.8" width="2.5" height="19.2" fill="#59646c"/><path d="M6.3 1.9 L2 5.6" stroke="#59646c" stroke-width="2.4" stroke-linecap="round" fill="none"/></svg>,3<svg width="10.2" height="20" style="display:inline-block;vertical-align:baseline;overflow:visible"><rect x="5.2" y="0.8" width="2.5" height="19.2" fill="#59646c"/><path d="M6.3 1.9 L2 5.6" stroke="#59646c" stroke-width="2.4" stroke-linecap="round" fill="none"/></svg>4.77</span><span id="t107" style="position:absolute;top:1577.29px;font-size:28px;line-height:28px;font-weight:400;color:#59646c;white-space:nowrap;left:214.44px;transform-origin:0 0;transform:scaleX(0.9796);">Dean Smith</span><span id="t108" style="position:absolute;top:1577.29px;font-size:28px;line-height:28px;font-weight:400;color:#59646c;white-space:nowrap;right:2136.41px;transform-origin:100% 0;transform:scaleX(1.0300);">76.00</span><span id="t109" style="position:absolute;top:1577.29px;font-size:28px;line-height:28px;font-weight:400;color:#59646c;white-space:nowrap;right:1928.41px;transform-origin:100% 0;transform:scaleX(1.0300);">$3,076.92</span><span id="t110" style="position:absolute;top:1577.29px;font-size:28px;line-height:28px;font-weight:400;color:#59646c;white-space:nowrap;right:1726.41px;transform-origin:100% 0;transform:scaleX(1.0300);">$0.00</span><span id="t111" style="position:absolute;top:1577.29px;font-size:28px;line-height:28px;font-weight:400;color:#59646c;white-space:nowrap;right:1519.41px;transform-origin:100% 0;transform:scaleX(1.0300);">$3,076.92</span><span id="t112" style="position:absolute;top:1577.29px;font-size:28px;line-height:28px;font-weight:400;color:#59646c;white-space:nowrap;right:1317.41px;transform-origin:100% 0;transform:scaleX(1.0300);">$0.00</span><span id="t113" style="position:absolute;top:1577.29px;font-size:28px;line-height:28px;font-weight:400;color:#59646c;white-space:nowrap;right:1110.41px;transform-origin:100% 0;transform:scaleX(1.0300);">$<svg width="10.2" height="20" style="display:inline-block;vertical-align:baseline;overflow:visible"><rect x="5.2" y="0.8" width="2.5" height="19.2" fill="#59646c"/><path d="M6.3 1.9 L2 5.6" stroke="#59646c" stroke-width="2.4" stroke-linecap="round" fill="none"/></svg>,446.00</span><span id="t114" style="position:absolute;top:1577.29px;font-size:28px;line-height:28px;font-weight:400;color:#59646c;white-space:nowrap;right:973.41px;transform-origin:100% 0;transform:scaleX(1.0300);">$0.00</span><span id="t115" style="position:absolute;top:1577.29px;font-size:28px;line-height:28px;font-weight:400;color:#59646c;white-space:nowrap;right:767.41px;transform-origin:100% 0;transform:scaleX(1.0300);">$323.08</span><span id="t116" style="position:absolute;top:1577.29px;font-size:28px;line-height:28px;font-weight:400;color:#59646c;white-space:nowrap;right:631.41px;transform-origin:100% 0;transform:scaleX(1.0300);">$0.00</span><span id="t117" style="position:absolute;top:1577.29px;font-size:28px;line-height:28px;font-weight:400;color:#59646c;white-space:nowrap;right:451.41px;transform-origin:100% 0;transform:scaleX(1.0300);">$0.00</span><span id="t118" style="position:absolute;top:1577.29px;font-size:28px;line-height:28px;font-weight:400;color:#59646c;white-space:nowrap;right:273.41px;transform-origin:100% 0;transform:scaleX(1.0300);">$0.00</span><span id="t119" style="position:absolute;top:1577.29px;font-size:28px;line-height:28px;font-weight:400;color:#59646c;white-space:nowrap;right:68.41px;transform-origin:100% 0;transform:scaleX(1.0300);">$<svg width="10.2" height="20" style="display:inline-block;vertical-align:baseline;overflow:visible"><rect x="5.2" y="0.8" width="2.5" height="19.2" fill="#59646c"/><path d="M6.3 1.9 L2 5.6" stroke="#59646c" stroke-width="2.4" stroke-linecap="round" fill="none"/></svg>,630.92</span><span id="t120" style="position:absolute;top:1241.29px;font-size:28px;line-height:28px;font-weight:400;color:#59646c;white-space:nowrap;right:792.01px;transform-origin:100% 0;transform:scaleX(1.0300);">$6,323.<svg width="10.2" height="20" style="display:inline-block;vertical-align:baseline;overflow:visible"><rect x="5.2" y="0.8" width="2.5" height="19.2" fill="#59646c"/><path d="M6.3 1.9 L2 5.6" stroke="#59646c" stroke-width="2.4" stroke-linecap="round" fill="none"/></svg>0</span>
<div style="position:absolute;left:0;top:1593px;width:2950px;height:6px;background:#181415"></div><div style="position:absolute;left:2945px;top:0;width:5px;height:1599px;background:#181415"></div>
</body></html>
